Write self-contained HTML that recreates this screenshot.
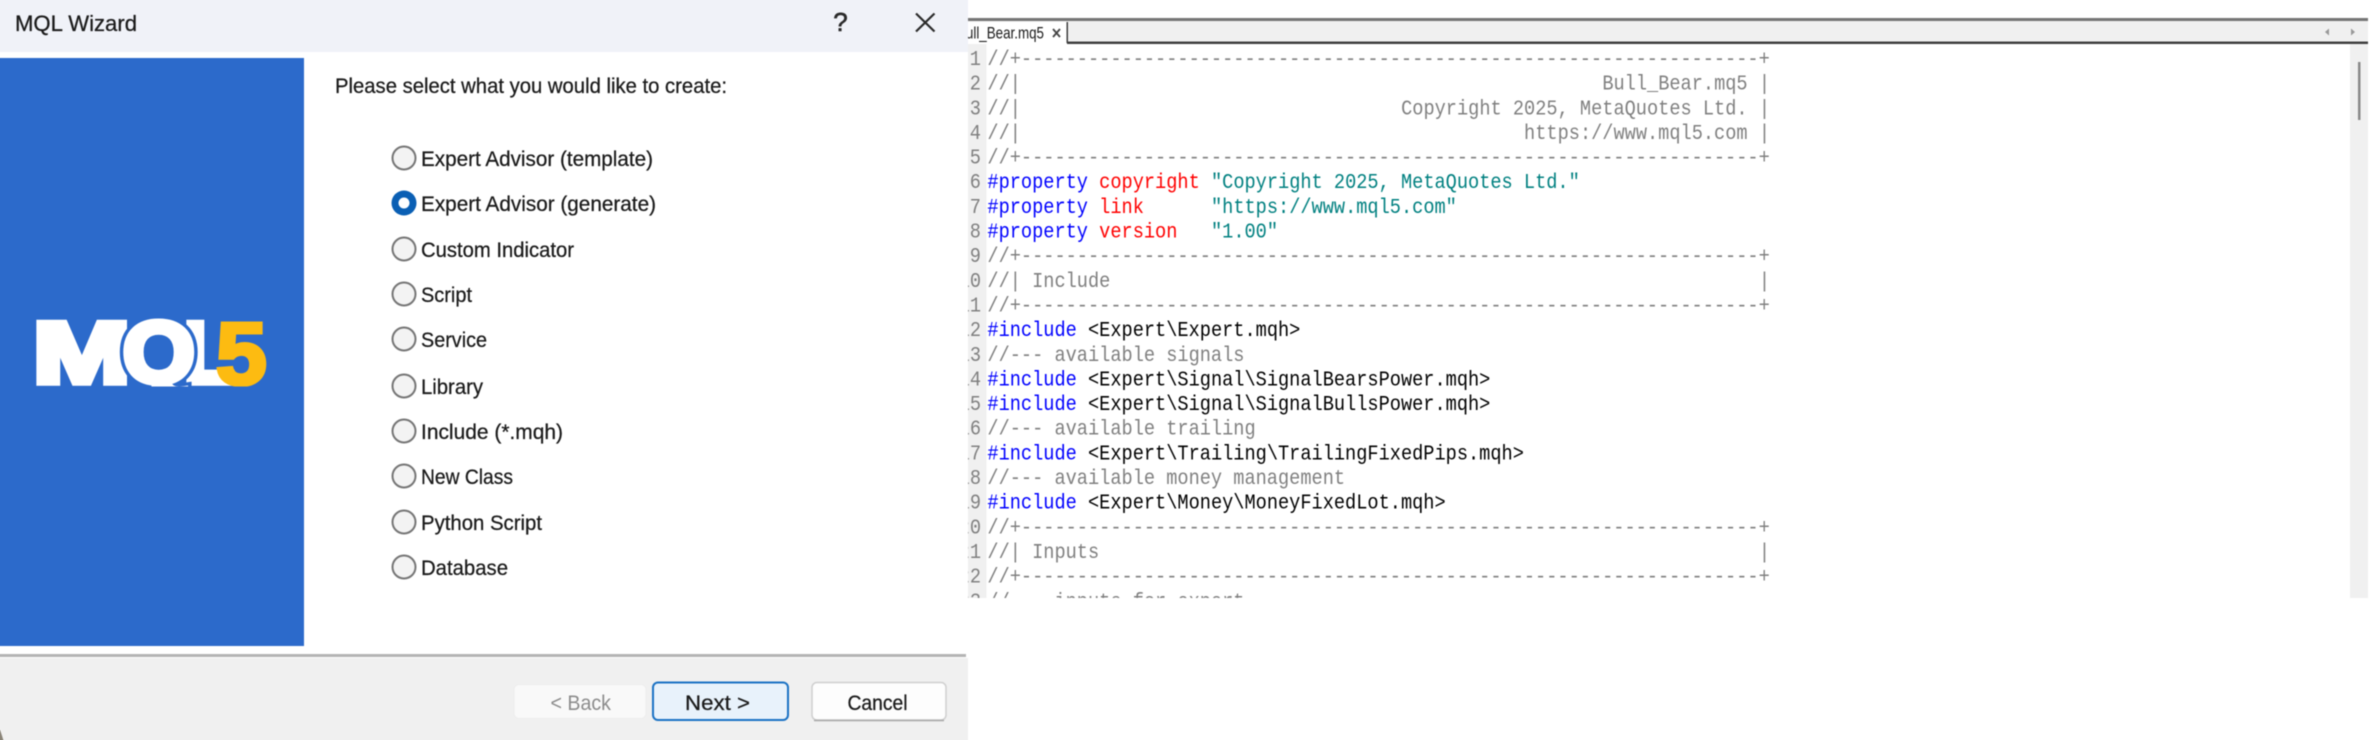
<!DOCTYPE html>
<html>
<head>
<meta charset="utf-8">
<style>
html,body{margin:0;padding:0;background:#fff;width:2370px;height:740px;overflow:hidden;position:relative}
svg{display:block;position:absolute;left:-6px;top:-6px;filter:blur(0.45px)}
text{font-family:"Liberation Sans",sans-serif;white-space:pre}
.s{font-size:21px;fill:#1a1a1a;stroke:#1a1a1a;stroke-width:.25px}
.m text{font-family:"Liberation Mono",monospace;font-size:21px}
.c{fill:#808080}.b{fill:#0000ff}.r{fill:#ff0000}.t{fill:#008080}.k{fill:#000}
.logo{font-family:"Liberation Sans",sans-serif;font-weight:700;font-size:86px}
</style>
</head>
<body>
<svg xmlns="http://www.w3.org/2000/svg" width="2382" height="752" viewBox="-6 -6 2382 752">
<defs>
<clipPath id="ed"><rect x="968" y="44" width="1402" height="554"/></clipPath>
<clipPath id="tb"><rect x="968" y="22" width="100" height="22"/></clipPath>
<clipPath id="lg"><rect x="0" y="300" width="304" height="86.5"/></clipPath>
</defs>
<rect x="-6" y="-6" width="2382" height="752" fill="#fff"/>

<!-- dialog -->
<rect x="-6" y="-6" width="974" height="58" fill="#f0f2f8"/>
<text x="15" y="31" font-size="22" fill="#1a1a1a" stroke="#1a1a1a" stroke-width=".25" textLength="122" lengthAdjust="spacingAndGlyphs">MQL Wizard</text>
<text x="840.5" y="31" font-size="26" fill="#2a2a2a" stroke="#2a2a2a" stroke-width=".6" text-anchor="middle">?</text>
<path d="M916 13.5L934.5 31.5M934.5 13.5L916 31.5" stroke="#2a2a2a" stroke-width="2.2" fill="none"/>

<rect x="-6" y="58" width="310" height="588" fill="#2c6acb"/>
<!-- logo -->
<g clip-path="url(#lg)">
<text class="logo" transform="translate(33,382.5) scale(1.36,1)" fill="#fff" stroke="#fff" stroke-width="6.5">M</text>
<text class="logo" transform="translate(184,382.5) scale(.95,1)" fill="#fff" stroke="#fff" stroke-width="6.5">L</text>
<text class="logo" transform="translate(123,382) scale(1.07,1)" fill="#2c6acb" stroke="#2c6acb" stroke-width="13">Q</text>
<text class="logo" transform="translate(123,382) scale(1.07,1)" fill="#fff" stroke="#fff" stroke-width="6.5">Q</text>
<text class="logo" transform="translate(216,384) scale(1.06,1.02)" fill="#fdbb11" stroke="#fdbb11" stroke-width="4">5</text>
</g>

<text class="s" x="335" y="93" textLength="392" lengthAdjust="spacingAndGlyphs">Please select what you would like to create:</text>

<g fill="#f3f3f3" stroke="#767676" stroke-width="2">
<circle cx="404" cy="158" r="11.5"/>
<circle cx="404" cy="249" r="11.5"/>
<circle cx="404" cy="294" r="11.5"/>
<circle cx="404" cy="339" r="11.5"/>
<circle cx="404" cy="386" r="11.5"/>
<circle cx="404" cy="431" r="11.5"/>
<circle cx="404" cy="476" r="11.5"/>
<circle cx="404" cy="522" r="11.5"/>
<circle cx="404" cy="567" r="11.5"/>
</g>
<circle cx="404" cy="203" r="12.5" fill="#0a5fb4"/>
<circle cx="404" cy="203" r="5.5" fill="#fff"/>

<text class="s" x="421" y="166" textLength="232" lengthAdjust="spacingAndGlyphs">Expert Advisor (template)</text>
<text class="s" x="421" y="211" textLength="235" lengthAdjust="spacingAndGlyphs">Expert Advisor (generate)</text>
<text class="s" x="421" y="257" textLength="153" lengthAdjust="spacingAndGlyphs">Custom Indicator</text>
<text class="s" x="421" y="302" textLength="51" lengthAdjust="spacingAndGlyphs">Script</text>
<text class="s" x="421" y="347" textLength="66" lengthAdjust="spacingAndGlyphs">Service</text>
<text class="s" x="421" y="394" textLength="62" lengthAdjust="spacingAndGlyphs">Library</text>
<text class="s" x="421" y="439" textLength="142" lengthAdjust="spacingAndGlyphs">Include (*.mqh)</text>
<text class="s" x="421" y="484" textLength="92" lengthAdjust="spacingAndGlyphs">New Class</text>
<text class="s" x="421" y="530" textLength="121" lengthAdjust="spacingAndGlyphs">Python Script</text>
<text class="s" x="421" y="575" textLength="87" lengthAdjust="spacingAndGlyphs">Database</text>

<!-- footer -->
<rect x="-6" y="654" width="972" height="3" fill="#b4b4b4"/>
<rect x="-6" y="658" width="974" height="88" fill="#f0f0f0"/>
<path d="M-6 730H0Q2 735 5 746H-6Z" fill="#8a8478"/>

<rect x="514" y="684.5" width="132" height="34" rx="5" fill="#f9f9f9" stroke="#ededed" stroke-width="1"/>
<text x="550.5" y="710" font-size="21" fill="#8c8c8c" textLength="60.5" lengthAdjust="spacingAndGlyphs">&lt; Back</text>
<rect x="653" y="682.5" width="135" height="37.5" rx="5" fill="#e8f2fb" stroke="#1a72c4" stroke-width="2"/>
<text class="s" x="685" y="710" textLength="65" lengthAdjust="spacingAndGlyphs">Next &gt;</text>
<rect x="812" y="682.5" width="134" height="37.5" rx="5" fill="#fdfdfd" stroke="#cfcfcf" stroke-width="1.5"/>
<path d="M814 720.5H944" stroke="#a8a8a8" stroke-width="1.5"/>
<text class="s" x="847.5" y="710" textLength="60" lengthAdjust="spacingAndGlyphs">Cancel</text>

<!-- editor tab bar -->
<rect x="968" y="18" width="1400" height="3" fill="#757575"/>
<rect x="968" y="21" width="1400" height="20" fill="#f0f0f0"/>
<rect x="968" y="41.5" width="1400" height="2.5" fill="#3f3f3f"/>
<rect x="968" y="22" width="99" height="22" fill="#fff"/>
<rect x="1066.5" y="22" width="1.5" height="21" fill="#3f3f3f"/>
<g clip-path="url(#tb)">
<text x="957" y="38.5" font-size="16.5" fill="#1a1a1a" textLength="87" lengthAdjust="spacingAndGlyphs">Bull_Bear.mq5</text>
</g>
<path d="M1053 29L1060 37M1060 29L1053 37" stroke="#444" stroke-width="1.8" fill="none"/>
<path d="M2329 28.5V35.5L2325 32Z" fill="#999"/>
<path d="M2351 28.5V35.5L2355 32Z" fill="#999"/>

<!-- gutter + scrollbar -->
<rect x="968" y="44" width="18.5" height="554" fill="#f0f0f0"/>
<rect x="2350" y="44" width="18" height="554" fill="#f0f0f0"/>
<rect x="2358" y="62" width="2.5" height="58" fill="#8a8a8a"/>

<g clip-path="url(#ed)">
<g class="m" transform="translate(981,0) scale(.8872,1)" text-anchor="end">
<text class="c" y="65">1</text>
<text class="c" y="89.65">2</text>
<text class="c" y="114.3">3</text>
<text class="c" y="138.95">4</text>
<text class="c" y="163.6">5</text>
<text class="c" y="188.25">6</text>
<text class="c" y="212.9">7</text>
<text class="c" y="237.55">8</text>
<text class="c" y="262.2">9</text>
<text class="c" y="286.85">10</text>
<text class="c" y="311.5">11</text>
<text class="c" y="336.15">12</text>
<text class="c" y="360.8">13</text>
<text class="c" y="385.45">14</text>
<text class="c" y="410.1">15</text>
<text class="c" y="434.75">16</text>
<text class="c" y="459.4">17</text>
<text class="c" y="484.05">18</text>
<text class="c" y="508.7">19</text>
<text class="c" y="533.35">20</text>
<text class="c" y="558">21</text>
<text class="c" y="582.65">22</text>
<text class="c" y="607.3">23</text>
</g>
<g class="m" transform="translate(987.4,0) scale(.8872,1)">
<text class="c" y="65">//+------------------------------------------------------------------+</text>
<text class="c" y="89.65">//|<tspan x="693.1">Bull_Bear.mq5</tspan><tspan x="869.5">|</tspan></text>
<text class="c" y="114.3">//|<tspan x="466.3">Copyright 2025, MetaQuotes Ltd.</tspan><tspan x="869.5">|</tspan></text>
<text class="c" y="138.95">//|<tspan x="604.9">https://www.mql5.com</tspan><tspan x="869.5">|</tspan></text>
<text class="c" y="163.6">//+------------------------------------------------------------------+</text>
<text y="188.25"><tspan class="b">#property</tspan><tspan class="r" x="126">copyright</tspan><tspan class="t" x="252">"Copyright 2025, MetaQuotes Ltd."</tspan></text>
<text y="212.9"><tspan class="b">#property</tspan><tspan class="r" x="126">link</tspan><tspan class="t" x="252">"https://www.mql5.com"</tspan></text>
<text y="237.55"><tspan class="b">#property</tspan><tspan class="r" x="126">version</tspan><tspan class="t" x="252">"1.00"</tspan></text>
<text class="c" y="262.2">//+------------------------------------------------------------------+</text>
<text class="c" y="286.85">//| Include<tspan x="869.5">|</tspan></text>
<text class="c" y="311.5">//+------------------------------------------------------------------+</text>
<text y="336.15"><tspan class="b">#include</tspan><tspan class="k" x="113.4">&lt;Expert\Expert.mqh&gt;</tspan></text>
<text class="c" y="360.8">//--- available signals</text>
<text y="385.45"><tspan class="b">#include</tspan><tspan class="k" x="113.4">&lt;Expert\Signal\SignalBearsPower.mqh&gt;</tspan></text>
<text y="410.1"><tspan class="b">#include</tspan><tspan class="k" x="113.4">&lt;Expert\Signal\SignalBullsPower.mqh&gt;</tspan></text>
<text class="c" y="434.75">//--- available trailing</text>
<text y="459.4"><tspan class="b">#include</tspan><tspan class="k" x="113.4">&lt;Expert\Trailing\TrailingFixedPips.mqh&gt;</tspan></text>
<text class="c" y="484.05">//--- available money management</text>
<text y="508.7"><tspan class="b">#include</tspan><tspan class="k" x="113.4">&lt;Expert\Money\MoneyFixedLot.mqh&gt;</tspan></text>
<text class="c" y="533.35">//+------------------------------------------------------------------+</text>
<text class="c" y="558">//| Inputs<tspan x="869.5">|</tspan></text>
<text class="c" y="582.65">//+------------------------------------------------------------------+</text>
<text class="c" y="607.3">//--- inputs for expert</text>
</g>
</g>
</svg>
</body>
</html>
